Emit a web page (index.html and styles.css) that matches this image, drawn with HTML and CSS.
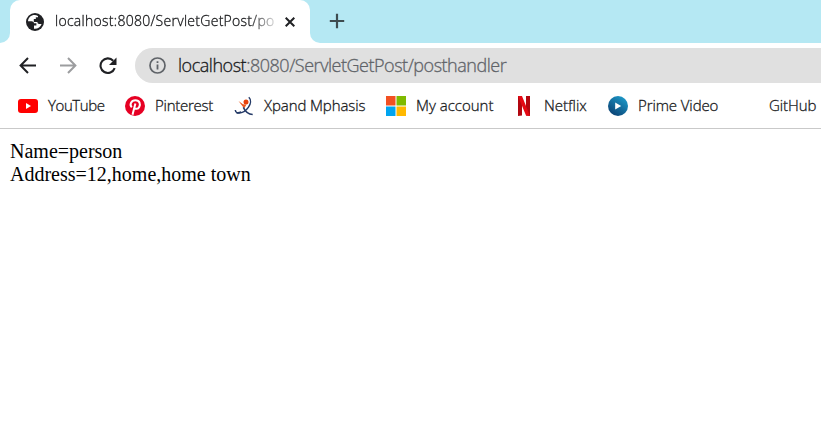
FILE: index.html
```html
<!DOCTYPE html>
<html lang="en">
<head>
<meta charset="utf-8">
<title>localhost:8080/ServletGetPost/posthandler</title>
<link rel="stylesheet" href="styles.css">
</head>
<body>
<header class="tabs">
  <div class="edge"></div>
  <div class="tab">
    <svg class="globe" width="18" height="18" viewBox="0 0 18 18"><circle cx="9" cy="9" r="9" fill="#202124"/><path d="M8.6 2C5 2 2.2 4.7 2 8.2H5.6C7.2 8.2 8 9.2 8 10.3H10.4V12.6H8V15.8C11.5 16.2 14.5 14 15.6 11H13.2C12 11 11.4 10 11.4 9H7.8V6H9.8V4.2H12V3C11 2.3 9.8 2 8.6 2Z" fill="#fff"/></svg>
    <span class="title">localhost:8080/ServletGetPost/po</span>
    <svg width="10" height="10" viewBox="0 0 10 10"><path d="M.7.7 9.3 9.3M9.3.7.7 9.3" stroke="#202124" stroke-width="2"/></svg>
  </div>
  <div class="strip">
    <svg width="16" height="16" viewBox="0 0 16 16"><path d="M8 .8V15.2M.8 8H15.2" stroke="#3e4c50" stroke-width="2.2"/></svg>
  </div>
</header>
<nav class="toolbar">
  <svg width="18" height="18" viewBox="0 0 18 18"><path d="M17 8.5H2M9 1 1.6 8.5 9 16" fill="none" stroke="#202124" stroke-width="2"/></svg>
  <svg width="18" height="18" viewBox="0 0 18 18"><path d="M1 8.5H16M9 1 16.4 8.5 9 16" fill="none" stroke="#9c9d9f" stroke-width="2"/></svg>
  <svg width="18" height="18" viewBox="0 0 18 18"><path d="M14.2 3.7A7.3 7.3 0 1 0 15.7 11.2" fill="none" stroke="#202124" stroke-width="2.1"/><path d="M17.5.5V8H10Z" fill="#202124"/></svg>
  <div class="address">
    <svg width="17" height="17" viewBox="0 0 17 17"><circle cx="8.5" cy="8.5" r="7.5" fill="none" stroke="#5f6368" stroke-width="1.7"/><path d="M8.5 7.5V12.6M8.5 4.3V6.1" stroke="#5f6368" stroke-width="1.8"/></svg>
    <span class="url"><b>localhost</b>:8080/ServletGetPost/posthandler</span>
  </div>
</nav>
<nav class="bookmarks">
  <a class="bm youtube"><svg width="20" height="20" viewBox="0 0 20 20"><rect y="3" width="20" height="14" rx="3" fill="#f00"/><path d="M8 7 13 10 8 13Z" fill="#fff"/></svg><span>YouTube</span></a>
  <a class="bm pinterest"><svg width="20" height="20" viewBox="0 0 20 20"><circle cx="10" cy="10" r="10" fill="#e60023"/><path d="M6.8 11.3C4.2 8.8 6.1 4.3 10.4 4.3S15.7 8 14.2 11C13 13.3 10.5 13.2 9.4 11.8M10.4 7.6 7.5 18.7" fill="none" stroke="#fff" stroke-width="2"/></svg><span>Pinterest</span></a>
  <a class="bm xpand"><svg width="20" height="20" viewBox="0 0 20 20"><circle cx="12" cy="6" r="2.5" fill="#e8420c"/><path d="M4.5 5 9 8.2 12.5 8.6 10.2 12.5 8.3 10Z" fill="#ee5a20"/><path d="M14.8 1.2C20 6 12.5 18.5 2.5 16.8" fill="none" stroke="#243a67" stroke-width="1.5"/><path d="M1.3 14Q1.6 18.3 7.2 16M9.3 11.4Q12.5 18.3 18.7 18.5" fill="none" stroke="#243a67" stroke-width="1.5"/></svg><span>Xpand Mphasis</span></a>
  <a class="bm account"><svg width="20" height="20" viewBox="0 0 20 20"><path d="M0 0H9.5V9.5H0Z" fill="#f25022"/><path d="M10.5 0H20V9.5H10.5Z" fill="#7fba00"/><path d="M0 10.5H9.5V20H0Z" fill="#00a4ef"/><path d="M10.5 10.5H20V20H10.5Z" fill="#ffb900"/></svg><span>My account</span></a>
  <a class="bm netflix"><svg width="20" height="20" viewBox="0 0 20 20"><path d="M4 0H8V19.5L4 20ZM12 0H16V20L12 19.5Z" fill="#b20710"/><path d="M4 0H8L16 20 12 19.5Z" fill="#e50914"/></svg><span>Netflix</span></a>
  <a class="bm prime"><svg width="20" height="20" viewBox="0 0 20 20"><defs><linearGradient id="sea" x1="1" y1="0" x2=".3" y2="1"><stop stop-color="#1fa5d4"/><stop offset="1" stop-color="#0b4375"/></linearGradient></defs><circle cx="10" cy="10" r="10" fill="url(#sea)"/><path d="M7.2 6.5 13.2 10 7.2 13.5Z" fill="#fff"/></svg><span>Prime Video</span></a>
  <a class="bm github"><i></i><span>GitHub</span></a>
</nav>
<main>Name=person<br>Address=12,home,home town</main>
</body>
</html>
```
FILE: styles.css
```css
* { box-sizing: border-box; }
body { margin: 0; background: #fff; color: #18191b; font-family: "Open Sans", sans-serif; font-weight: 300; overflow: hidden; }
svg, i { display: block; flex: none; }
.title, .url, .bm { -webkit-text-stroke: 0.3px; }
.tabs { display: flex; height: 43px; background: linear-gradient(#b5e8f3 0 25px, #fff 25px); }
.edge { width: 10px; background: #b5e8f3; border-bottom-right-radius: 10px; }
.tab { width: 300px; display: flex; align-items: center; padding-left: 16px; background: #fff; border-radius: 10px 10px 0 0; }
.title { width: 220px; margin: -2px 10px 0 11px; white-space: nowrap; font-size: 14px; line-height: 20px; letter-spacing: 0.28px; -webkit-mask-image: linear-gradient(90deg, #000 195px, transparent 225px); mask-image: linear-gradient(90deg, #000 195px, transparent 225px); }
.strip { flex: 1; display: flex; align-items: center; padding: 0 0 1px 19px; background: #b5e8f3; border-bottom-left-radius: 10px; }
.toolbar { display: flex; align-items: center; gap: 22px; height: 45px; padding-left: 19px; }
.address { flex: 1; height: 35px; margin-left: -4px; padding-left: 14px; display: flex; align-items: center; gap: 12px; background: #e0e0e0; border-radius: 18px 0 0 18px; }
.url { margin-top: -2px; color: #5f6368; font-size: 18px; line-height: 24px; white-space: nowrap; letter-spacing: -0.47px; }
.url b { color: #18191b; font-weight: inherit; }
.bookmarks { display: grid; grid-template-columns: 107px 109px 152px 128px 94px 131px 82px; align-items: center; height: 41px; padding: 0 0 4px 18px; border-bottom: 1px solid #c9c9c9; }
.bm { display: flex; align-items: center; gap: 10px; font-size: 15px; line-height: 20px; white-space: nowrap; letter-spacing: -0.1px; }
.bm.youtube { letter-spacing: -0.4px; }
.bm.pinterest { letter-spacing: -0.25px; }
.bm.account, .bm.netflix { letter-spacing: 0; }
.bm span { margin-top: -2px; }
.bm i { width: 20px; }
main { padding: 11px 10px; color: #000; font: 20px/23px "Liberation Serif", serif; }
```
